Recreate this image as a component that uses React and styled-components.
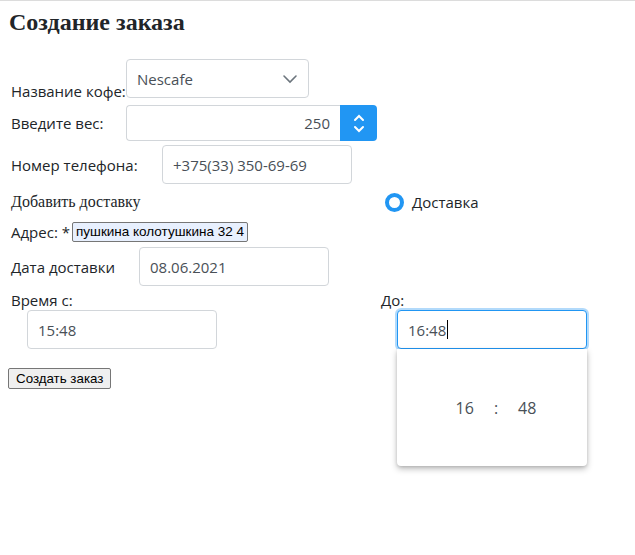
import React from "react";
import styled, { createGlobalStyle } from "styled-components";

const GlobalStyle = createGlobalStyle`
  html, body {
    margin: 0;
    padding: 0;
    background: #fff;
    min-height: 100%;
  }
  body {
    border-top: 1px solid #dcdcdc;
    padding: 0 8px;
    font-family: "Open Sans", "Noto Sans", sans-serif;
    color: #212529;
  }
`;

const Page = styled.div`
  position: relative;
  width: 619px;
  min-height: 546px;
`;

const Title = styled.h2`
  margin: 6px 0 0 1px;
  font-family: "Liberation Serif", serif;
  font-weight: bold;
  font-size: 24px;
  line-height: 30px;
`;

const Form = styled.form`
  display: flex;
  flex-direction: column;
  padding-top: 22px;
`;

const Row = styled.div`
  display: flex;
  align-items: ${(p) => p.$align || "center"};
  padding-left: 3px;
  margin-bottom: ${(p) => p.$mb || 0}px;
`;

const Label = styled.label`
  font-size: 15px;
  line-height: 20px;
  width: ${(p) => (p.$w ? `${p.$w}px` : "auto")};
  flex-shrink: 0;
  margin-bottom: ${(p) => p.$drop || 0}px;
`;

const Field = styled.div`
  box-sizing: border-box;
  width: ${(p) => p.$w}px;
  height: ${(p) => p.$h || 39}px;
  border: 1px solid ${(p) => (p.$focus ? "#2196f3" : "#d2d6da")};
  border-radius: 4px;
  display: flex;
  align-items: center;
  justify-content: ${(p) => (p.$right ? "flex-end" : "flex-start")};
  padding: 0 10px;
  font-size: 15px;
  color: #495057;
  background: #fff;
  box-shadow: ${(p) => (p.$focus ? "0 0 0 2px rgba(33,150,243,0.35)" : "none")};
`;

const Chevron = styled.svg`
  margin-left: auto;
  width: 16px;
  height: 16px;
  color: #6c757d;
`;

const NumberGroup = styled.div`
  display: flex;
`;

const NumberField = styled(Field)`
  border-radius: 4px 0 0 4px;
  border-right: none;
`;

const Spinner = styled.div`
  width: 37px;
  height: 36px;
  background: #2196f3;
  border-radius: 0 4px 4px 0;
  display: flex;
  flex-direction: column;
  align-items: center;
  justify-content: center;
  gap: 3px;
`;

const SerifText = styled.span`
  font-family: "Liberation Serif", serif;
  font-size: 16px;
  line-height: 20px;
  width: 374px;
  flex-shrink: 0;
`;

const Radio = styled.span`
  box-sizing: border-box;
  width: 19px;
  height: 19px;
  border-radius: 50%;
  border: 4px solid #2196f3;
  background: #fff;
  margin-right: 8px;
`;

const RadioText = styled.span`
  font-size: 15px;
`;

const AddressInput = styled.span`
  box-sizing: border-box;
  height: 20px;
  width: 176px;
  border: 1px solid #767676;
  border-radius: 2px;
  background: #e8f0fe;
  font-family: "Liberation Sans", Arial, sans-serif;
  font-size: 13.5px;
  line-height: 18px;
  padding: 0 3px;
  color: #000;
  white-space: nowrap;
`;

const TimeGrid = styled.div`
  display: grid;
  grid-template-columns: 370px 1fr;
  padding-left: 3px;
`;

const TimeCol = styled.div`
  display: flex;
  flex-direction: column;
`;

const TimeInputWrap = styled.div`
  margin-left: 16px;
  position: relative;
`;

const Caret = styled.span`
  display: inline-block;
  width: 1px;
  height: 19px;
  background: #000;
  margin-left: 1px;
`;

const Dropdown = styled.div`
  position: absolute;
  top: 39px;
  left: 0;
  width: 190px;
  height: 117px;
  background: #fff;
  border-radius: 0 0 4px 4px;
  box-shadow: 0 3px 6px rgba(0, 0, 0, 0.25), 0 1px 3px rgba(0, 0, 0, 0.12);
  display: flex;
  align-items: center;
  justify-content: center;
  gap: 20px;
  padding-left: 8px;
  box-sizing: border-box;
  font-size: 16px;
  color: #495057;
  z-index: 2;
`;

const SubmitButton = styled.button`
  align-self: flex-start;
  margin-top: 19px;
  height: 21px;
  padding: 0 7px;
  font-family: "Liberation Sans", Arial, sans-serif;
  font-size: 13.33px;
  background: #efefef;
  border: 1px solid #767676;
  border-radius: 2px;
  color: #000;
`;

const ArrowUp = () => (
  <svg width="12" height="8" viewBox="0 0 12 8" fill="none" stroke="#fff" strokeWidth="2" strokeLinecap="round">
    <path d="M2 6 L6 2 L10 6" />
  </svg>
);

const ArrowDown = () => (
  <svg width="12" height="8" viewBox="0 0 12 8" fill="none" stroke="#fff" strokeWidth="2" strokeLinecap="round">
    <path d="M2 2 L6 6 L10 2" />
  </svg>
);

export default function App() {
  return (
    <>
      <GlobalStyle />
      <Page>
        <Title>Создание заказа</Title>
        <Form>
          <Row $align="flex-end" $mb={7}>
            <Label $w={115} $drop={-3}>Название кофе:</Label>
            <Field $w={183}>
              Nescafe
              <Chevron viewBox="0 0 16 16" fill="none" stroke="currentColor" strokeWidth="1.6" strokeLinecap="round">
                <path d="M2 5 L8 11 L14 5" />
              </Chevron>
            </Field>
          </Row>
          <Row $mb={4}>
            <Label $w={115}>Введите вес:</Label>
            <NumberGroup>
              <NumberField $w={214} $h={36} $right>250</NumberField>
              <Spinner>
                <ArrowUp />
                <ArrowDown />
              </Spinner>
            </NumberGroup>
          </Row>
          <Row $mb={8}>
            <Label $w={151}>Номер телефона:</Label>
            <Field $w={190}>+375(33) 350-69-69</Field>
          </Row>
          <Row $mb={10}>
            <SerifText>Добавить доставку</SerifText>
            <Radio />
            <RadioText>Доставка</RadioText>
          </Row>
          <Row $mb={5}>
            <Label $w={61}>Адрес: *</Label>
            <AddressInput>пушкина колотушкина 32 4</AddressInput>
          </Row>
          <Row $mb={4}>
            <Label $w={128}>Дата доставки</Label>
            <Field $w={190}>08.06.2021</Field>
          </Row>
          <TimeGrid>
            <TimeCol>
              <Label>Время с:</Label>
              <TimeInputWrap>
                <Field $w={190}>15:48</Field>
              </TimeInputWrap>
            </TimeCol>
            <TimeCol>
              <Label>До:</Label>
              <TimeInputWrap>
                <Field $w={190} $focus>
                  16:48
                  <Caret />
                </Field>
                <Dropdown>
                  <span>16</span>
                  <span>:</span>
                  <span>48</span>
                </Dropdown>
              </TimeInputWrap>
            </TimeCol>
          </TimeGrid>
          <SubmitButton type="button">Создать заказ</SubmitButton>
        </Form>
      </Page>
    </>
  );
}
